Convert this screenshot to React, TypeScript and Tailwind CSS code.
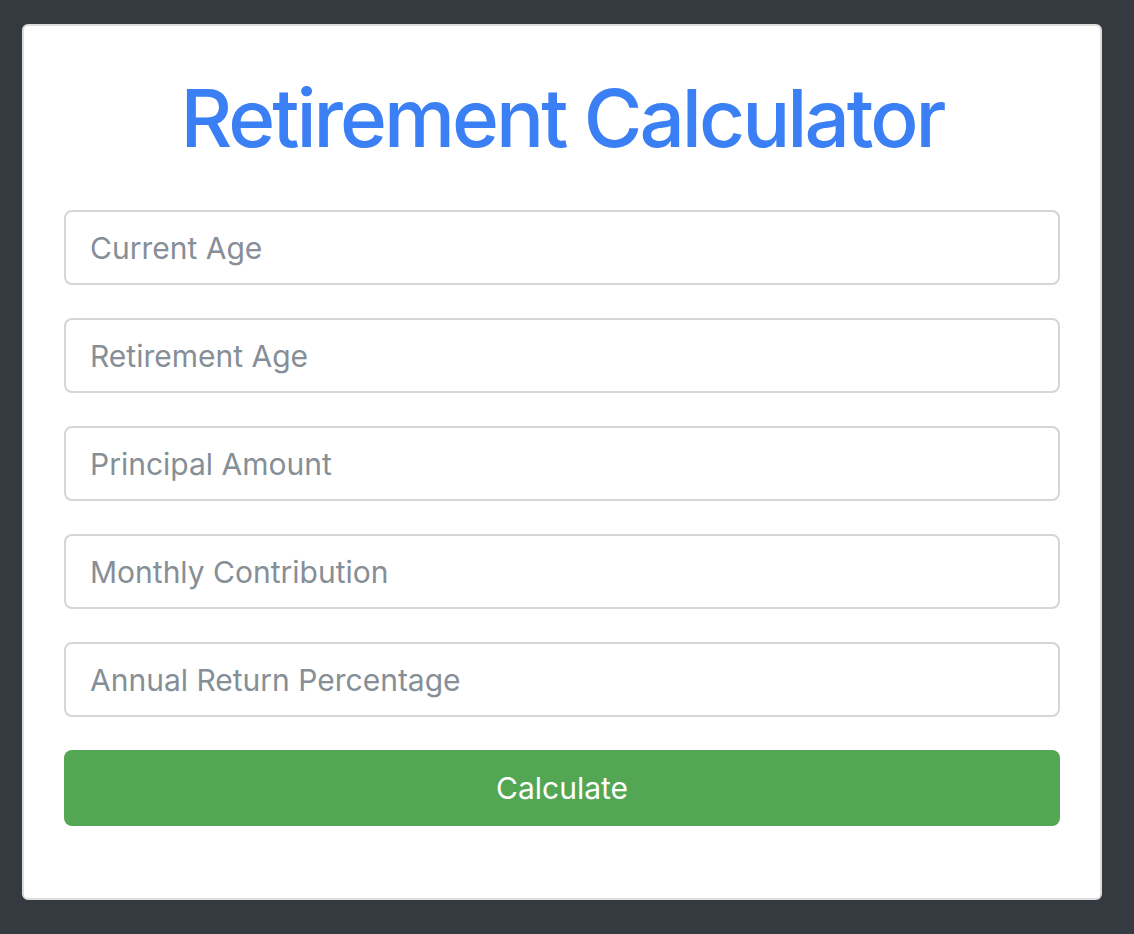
import React from "react";

const fields = [
  "Current Age",
  "Retirement Age",
  "Principal Amount",
  "Monthly Contribution",
  "Annual Return Percentage",
];

export default function App() {
  return (
    <div
      className="min-h-[934px] w-full bg-[#343a40] pt-[24px] pl-[22px]"
      style={{ fontFamily: "Inter, 'Liberation Sans', sans-serif" }}
    >
      <div className="w-[1080px] h-[876px] bg-white border-2 border-[#dcdcdc] rounded-[6px] px-[40px] pt-[52px]">
        <h1 className="text-center text-[#3b7ff5] text-[80px] leading-[80px] font-medium tracking-[-3px]">
          Retirement Calculator
        </h1>
        <div className="mt-[52px] flex flex-col gap-[33px]">
          {fields.map((f) => (
            <input
              key={f}
              type="text"
              placeholder={f}
              className="h-[75px] w-full border-2 border-[#d3d6d9] rounded-[8px] px-[24px] text-[30px] text-[#495057] placeholder:text-[#868e96] outline-none"
            />
          ))}
        </div>
        <button className="mt-[33px] h-[76px] w-full rounded-[8px] bg-[#53a653] text-white text-[30px]">
          Calculate
        </button>
      </div>
    </div>
  );
}
